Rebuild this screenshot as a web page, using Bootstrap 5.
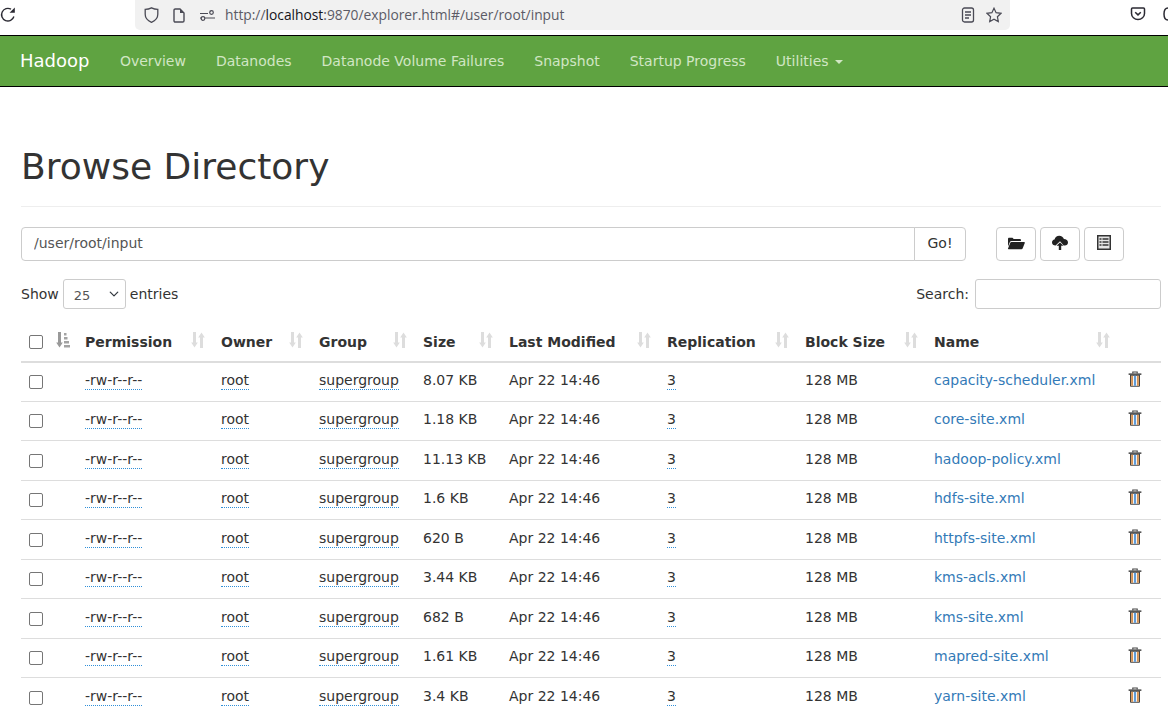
<!DOCTYPE html>
<html lang="en">
<head>
<meta charset="utf-8">
<title>Browsing HDFS</title>
<link href="https://cdn.jsdelivr.net/npm/bootstrap@5.3.0/dist/css/bootstrap.min.css" rel="stylesheet">
<style>
html,body{height:724px;overflow:hidden}
body{font-family:"DejaVu Sans",sans-serif;font-size:14px;line-height:20px;color:#333;background:#fff}
.chrome-bar{height:35px;position:relative}
.reload-ico{position:absolute;left:0;top:6px}
.url-box{position:absolute;left:135px;top:0;width:875px;height:30px;background:#f1f1f1;border-radius:0 0 5px 5px;display:flex;align-items:center;padding-left:9px;font-family:"Open Sans",sans-serif;font-size:13.8px;color:#5b5b66}
.url-box b{font-weight:400;color:#15141a}
.url-box svg{flex:none}
.gap-doc{margin-left:14px}
.gap-perm{margin-left:15px}
.url-txt{margin-left:10px}
.url-end{margin-left:auto;display:flex;gap:11px;margin-right:8px}
.pocket-ico{position:absolute;left:1130px;top:6px}
.partial-ico{position:absolute;left:1163px;top:7px}
.hd-nav{height:52px;background:#5fa341;border-top:1px solid #000;border-bottom:1px solid #000;padding:0 0 0 20px;justify-content:flex-start;flex-wrap:nowrap}
.hd-nav .navbar-brand{font-size:18px;color:#fff;padding:0;margin:0 15.5px 0 0;line-height:20px}
.hd-nav .nav-link{color:#d1e6c4;padding:0 15px;font-size:14px;line-height:20px}
.hd-nav .dropdown-toggle::after{border-top-width:4px;border-left-width:4px;border-right-width:4px;margin-left:6px;vertical-align:2px}
.main-wrap{padding:0 7px 0 21px}
.hd-title{margin:60px 0 0;padding-bottom:19px;border-bottom:1px solid #eee;font-size:36px;line-height:40px;font-weight:400;color:#333}
.path-row{margin-top:20px;gap:30px}
.path-group{width:945px}
.path-group .form-control{height:34px;border-radius:4px 0 0 4px;font-size:14px;padding:5px 12px 7px;color:#555;border-color:#ccc}
.path-group .btn{width:52px;height:34px;padding:0 0 2px;font-size:14px;color:#333;border-color:#ccc;border-radius:0 4px 4px 0;margin-left:-1px}
.tool-btns{gap:4px}
.tool-btn{width:40px;height:34px;padding:0 0 3px;border:1px solid #ccc;border-radius:4px;display:flex;align-items:center;justify-content:center;background:#fff}
.len-row{margin-top:18px;height:32px;padding-bottom:2px}
.len-lbl{margin-top:-1px}
.len-sel{width:63px;height:30px;font-size:13px;padding:6px 0 2px 10px;border-color:#ccc;border-radius:3px;margin:0 4px;color:#555;background-size:10px;background-position:right 6px center;display:inline-block}
.search-box{width:186px;height:30px;border:1px solid #ccc;border-radius:3px;margin-left:6px}
.file-tbl{table-layout:fixed;width:1140px;margin:11px 0 0;border-collapse:collapse;font-size:14px;color:#333}
.file-tbl th,.file-tbl td{padding:0 8px;vertical-align:middle;box-shadow:none;color:#333}
.file-tbl thead th{height:39.5px;border-bottom:2px solid #ddd;font-weight:700;position:relative;padding-top:1px}
.file-tbl tbody td{height:39.5px;border-bottom:1px solid #ddd;padding-bottom:3px}
.file-tbl tbody tr:last-child td{border-bottom:0}
.file-tbl .form-check-input{width:14px;height:14px;margin:0;border:1px solid #767676;border-radius:2px;display:block;float:none}
.file-tbl tbody .form-check-input{margin-top:4px}
.sort-ico{position:absolute;right:8px;top:10px}
.sort-first{right:7px}
.sort-name{right:10px}
.dot-under{border-bottom:1px dotted #2f8fd8;display:inline-block;line-height:18px}
.trash-ico{display:block;margin-top:-2px}
.file-tbl a{color:#337ab7;text-decoration:none}
</style>
</head>
<body>
<div class="chrome-bar">
  <svg class="reload-ico" width="16" height="17" viewBox="0 0 16 17" fill="none" stroke="#2b2a33" stroke-width="1.4"><path d="M13.900 10.500A6.300 6.300 0 1 1 11 3.200"/><path d="M14.800 1.500v5.200H9.600z" fill="#2b2a33" stroke="none"/></svg>
  <div class="url-box">
    <svg width="15" height="16" viewBox="0 0 15 16" fill="none" stroke="#4a4a55" stroke-width="1.300"><path d="M7.500.8c2 1 3.900 1.500 6.300 1.500v5c0 3.800-2.500 6.400-6.300 8-3.800-1.600-6.300-4.200-6.300-8v-5C3.600 2.300 5.500 1.800 7.500.8z"/></svg>
    <svg class="gap-doc" width="12" height="15" viewBox="0 0 12 15" fill="none" stroke="#4a4a55" stroke-width="1.400"><path d="M1 2.300C1 1.500 1.500 1 2.300 1H7l4 4v7.700c0 .8-.5 1.300-1.300 1.300H2.300C1.500 14 1 13.500 1 12.700z"/><path d="M7 1l4 4H7z" fill="#4a4a55" stroke="none"/></svg>
    <svg class="gap-perm" width="15" height="11" viewBox="0 0 15 11" fill="none" stroke="#4a4a55" stroke-width="1.200"><path d="M0 3.500h8M0 8h15"/><circle cx="11.500" cy="2.500" r="1.800"/><circle cx="3" cy="8.500" r="1.800" fill="#f1f1f1"/></svg>
    <span class="url-txt">http://<b>localhost</b>:9870/explorer.html#/user/root/input</span>
    <span class="url-end">
      <svg width="14" height="16" viewBox="0 0 14 16" fill="none" stroke="#4a4a55" stroke-width="1.300"><rect x="1.500" y="1" width="11" height="14" rx="2"/><path d="M4 5h6M4 8h6M4 11h4"/></svg>
      <svg width="16" height="16" viewBox="0 0 16 16" fill="none" stroke="#4a4a55" stroke-width="1.200"><path d="M8 1.200l2.100 4.500 4.900.6-3.600 3.400.9 4.900L8 12.200l-4.300 2.400.9-4.900L1 6.300l4.900-.6z"/></svg>
    </span>
  </div>
  <svg class="pocket-ico" width="16" height="16" viewBox="0 0 16 16" fill="none" stroke="#2b2a33" stroke-width="1.500"><path d="M2.500 2h11c.6 0 1 .4 1 1v4.500c0 3.500-3 6-6.500 6s-6.500-2.500-6.500-6V3c0-.6.4-1 1-1z"/><path d="M5.200 6.200L8 8.900l2.800-2.700"/></svg>
  <svg class="partial-ico" width="5" height="14" viewBox="0 0 5 14" fill="none" stroke="#2b2a33" stroke-width="1.500"><path d="M5 1C2.500 1 1 3.500 1 7s1.500 6 4 6"/></svg>
</div>

<nav class="navbar hd-nav">
  <a class="navbar-brand" href="#">Hadoop</a>
  <ul class="navbar-nav flex-row">
    <li class="nav-item"><a class="nav-link" href="#">Overview</a></li>
    <li class="nav-item"><a class="nav-link" href="#">Datanodes</a></li>
    <li class="nav-item"><a class="nav-link" href="#">Datanode Volume Failures</a></li>
    <li class="nav-item"><a class="nav-link" href="#">Snapshot</a></li>
    <li class="nav-item"><a class="nav-link" href="#">Startup Progress</a></li>
    <li class="nav-item"><a class="nav-link dropdown-toggle" href="#">Utilities</a></li>
  </ul>
</nav>

<div class="main-wrap">
  <h1 class="hd-title">Browse Directory</h1>

  <div class="d-flex path-row">
    <div class="input-group path-group flex-nowrap">
      <input class="form-control" type="text" value="/user/root/input">
      <button class="btn" type="button">Go!</button>
    </div>
    <div class="d-flex tool-btns">
      <button class="tool-btn" type="button" aria-label="Create directory"><svg width="18" height="14" viewBox="0 0 18 14" fill="#222"><path d="M1 3c0-.8.5-1.300 1.200-1.300h3.300l1.200 1.200h6.200c.6 0 1 .4 1 1V5H4.500c-.8 0-1.300.4-1.600 1L1 10.500z"/><path d="M4.400 6h12.700c.6 0 .9.500.7 1l-2.200 5.500c-.2.500-.6.700-1.100.7H1.500c-.5 0-.7-.3-.5-.8L3.300 6.800c.2-.5.600-.8 1.100-.8z"/></svg></button>
      <button class="tool-btn" type="button" aria-label="Upload"><svg width="16" height="15" viewBox="0 0 16 15" fill="#222"><path d="M3.500 10.500C1.500 10.500 0 9.200 0 7.400 0 5.800 1.100 4.700 2.500 4.500 3 2.300 4.900.8 7.200.8c2.300 0 4.100 1.400 4.700 3.300 2.300 0 4.100 1.400 4.100 3.300 0 1.700-1.400 3.100-3.200 3.100h-1.100L8 6.300 3.600 10.500z"/><path d="M8 7.500l3.500 3.300H9.200V15H6.800v-4.200H4.500z"/></svg></button>
      <button class="tool-btn" type="button" aria-label="Table"><svg width="14" height="15" viewBox="0 0 14 15"><rect width="14" height="15" fill="#333"/><rect x="1.500" y="1.500" width="11" height="12" fill="#e4e4e4"/><path d="M2.500 4h2M2.500 7h2M2.500 10h2M5.500 4h6M5.500 7h6M5.500 10h6" stroke="#333" stroke-width="1.300" fill="none"/></svg></button>
    </div>
  </div>

  <div class="d-flex justify-content-between align-items-center len-row">
    <div class="d-flex align-items-center"><span class="len-lbl">Show</span>
      <select class="form-select len-sel" aria-label="entries"><option>25</option></select>
      <span class="len-lbl">entries</span></div>
    <div class="d-flex align-items-center"><span class="len-lbl">Search:</span><input class="search-box" type="search" aria-label="Search"></div>
  </div>

  <table class="table file-tbl" id="files">
    <colgroup><col style="width:56px"><col style="width:136px"><col style="width:98px"><col style="width:104px"><col style="width:86px"><col style="width:158px"><col style="width:138px"><col style="width:129px"><col style="width:194px"><col style="width:41px"></colgroup>
    <thead>
      <tr id="head"></tr>
    </thead>
    <tbody id="rows"></tbody>
  </table>
</div>

<script>
var arrows='<path d="M2 0h3v10.500h1.800L3.500 15.500.2 10.500H2z"/><path d="M9 16h3V5.500h1.800L10.500.5 7.200 5.500H9z"/>';
function sortOff(cls){return '<svg class="sort-ico '+cls+'" width="14" height="16" viewBox="0 0 14 16" fill="#ddd">'+arrows+'</svg>';}
var sortOn='<svg class="sort-ico sort-first" width="14" height="16" viewBox="0 0 14 16" fill="#a3a3a3"><path d="M2 0h3v10.500h1.800L3.500 15.500.2 10.500H2z" fill="#999"/><rect x="8" y="1" width="2.500" height="2.500"/><rect x="8" y="5" width="3.500" height="2.500"/><rect x="8" y="9" width="5" height="2.500"/><rect x="8" y="13" width="6" height="2.500"/></svg>';
var heads=['Permission','Owner','Group','Size','Last Modified','Replication','Block Size','Name'];
var h='<th><input class="form-check-input" type="checkbox" aria-label="Select all">'+sortOn+'</th>';
heads.forEach(function(t){h+='<th>'+t+sortOff(t==='Name'?'sort-name':'')+'</th>'});
h+='<th></th>';
document.getElementById('head').innerHTML=h;
var files=[['8.07 KB','capacity-scheduler.xml'],['1.18 KB','core-site.xml'],['11.13 KB','hadoop-policy.xml'],['1.6 KB','hdfs-site.xml'],['620 B','httpfs-site.xml'],['3.44 KB','kms-acls.xml'],['682 B','kms-site.xml'],['1.61 KB','mapred-site.xml'],['3.4 KB','yarn-site.xml']];
var trash='<svg class="trash-ico" width="14" height="16" viewBox="0 0 14 16"><path d="M4.800 2.500V1h4.400v1.500" fill="none" stroke="#444" stroke-width="1.100"/><rect x=".6" y="2.400" width="12.800" height="1.500" fill="#444"/><path d="M2 4.100h10v10.700c0 .5-.4 1-1 1H3c-.6 0-1-.5-1-1z" fill="#444"/><rect x="3" y="4.800" width="8" height="10" fill="#f2f2f2"/><rect x="3.200" y="4.800" width="1.700" height="10" fill="#d08844"/><rect x="6" y="4.800" width="2" height="10" fill="#5f9bd8"/><rect x="9.100" y="4.800" width="1.700" height="10" fill="#d08844"/></svg>';
var r='';
files.forEach(function(f){
 r+='<tr><td><input class="form-check-input" type="checkbox" aria-label="Select"></td>'+
 '<td><span class="dot-under">-rw-r--r--</span></td><td><span class="dot-under">root</span></td><td><span class="dot-under">supergroup</span></td>'+
 '<td>'+f[0]+'</td><td>Apr 22 14:46</td><td><span class="dot-under">3</span></td><td>128 MB</td><td><a href="#">'+f[1]+'</a></td><td>'+trash+'</td></tr>';
});
document.getElementById('rows').innerHTML=r;
</script>
<script src="https://cdn.jsdelivr.net/npm/bootstrap@5.3.0/dist/js/bootstrap.bundle.min.js"></script>
</body>
</html>
